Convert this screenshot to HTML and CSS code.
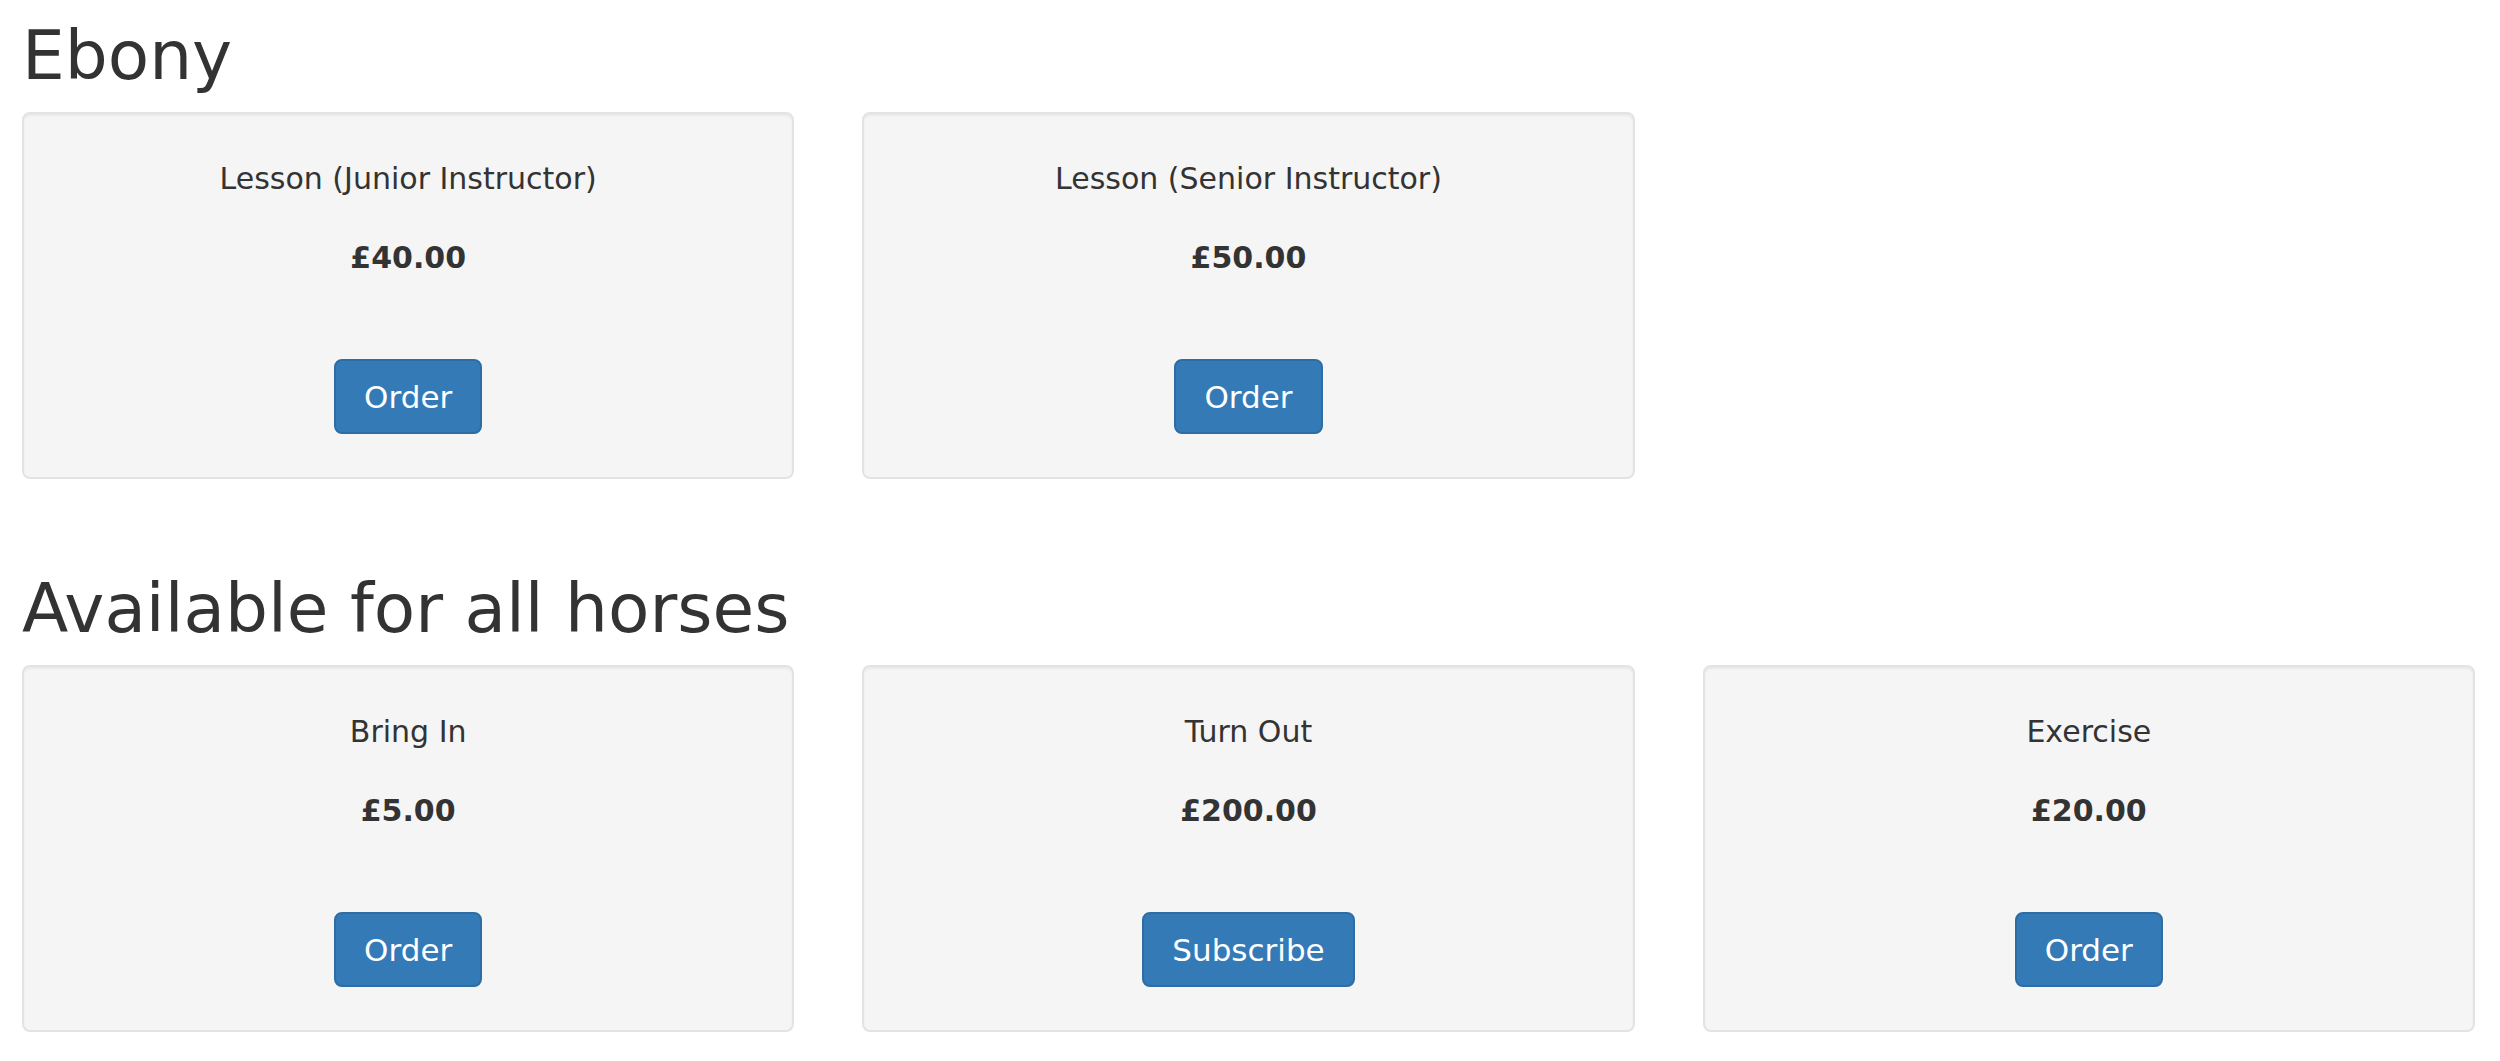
FILE: index.html
```html
<!DOCTYPE html>
<html>

<head>
    <meta charset="utf-8" />
    <title>Services</title>
    <meta name="viewport" content="width=device-width, initial-scale=1">
    <link rel="stylesheet" href="styles.css">
</head>

<body>
    <!-- horse specific services -->
    <div class="section">
        <h1 class="section-title">Ebony</h1>
        <div class="products">
            <div class="well">
                <p class="product-name">Lesson (Junior Instructor)</p>
                <p class="product-price">£40.00</p>
                <button type="button" class="btn">Order</button>
            </div>
            <div class="well">
                <p class="product-name">Lesson (Senior Instructor)</p>
                <p class="product-price">£50.00</p>
                <button type="button" class="btn">Order</button>
            </div>
        </div>
    </div>

    <!-- generic services -->
    <div class="section">
        <h1 class="section-title">Available for all horses</h1>
        <div class="products">
            <div class="well">
                <p class="product-name">Bring In</p>
                <p class="product-price">£5.00</p>
                <button type="button" class="btn">Order</button>
            </div>
            <div class="well">
                <p class="product-name">Turn Out</p>
                <p class="product-price">£200.00</p>
                <button type="button" class="btn">Subscribe</button>
            </div>
            <div class="well">
                <p class="product-name">Exercise</p>
                <p class="product-price">£20.00</p>
                <button type="button" class="btn">Order</button>
            </div>
        </div>
    </div>
</body>

</html>
```

FILE: styles.css
```css
body {
    margin: 0;
    padding: 18px 25px 0 22px;
    font-family: "DejaVu Sans", Verdana, sans-serif;
    color: #333;
    background: #fff;
}

.section {
    margin-bottom: 92px;
}

.section:last-child {
    margin-bottom: 0;
}

.section-title {
    margin: 0 0 19px;
    font-size: 67.7px;
    font-weight: normal;
    line-height: 75px;
}

.products {
    display: grid;
    grid-template-columns: repeat(3, 1fr);
    column-gap: 68px;
}

.well {
    padding: 45px 20px 43px;
    background: #f5f5f5;
    border: 2px solid #e3e3e3;
    border-radius: 8px;
    box-shadow: inset 0 2px 2px rgba(0, 0, 0, .05);
    text-align: center;
}

.product-name {
    margin: 0 0 39px;
    font-size: 30px;
    line-height: 40px;
}

.product-price {
    margin: 0 0 81px;
    font-size: 30px;
    font-weight: bold;
    line-height: 40px;
}

.btn {
    display: inline-block;
    margin: 0;
    padding: 12.5px 28px;
    font-family: inherit;
    font-size: 31px;
    line-height: 46px;
    color: #fff;
    background: #337ab7;
    border: 2px solid #2e6da4;
    border-radius: 8px;
    vertical-align: top;
}
```
